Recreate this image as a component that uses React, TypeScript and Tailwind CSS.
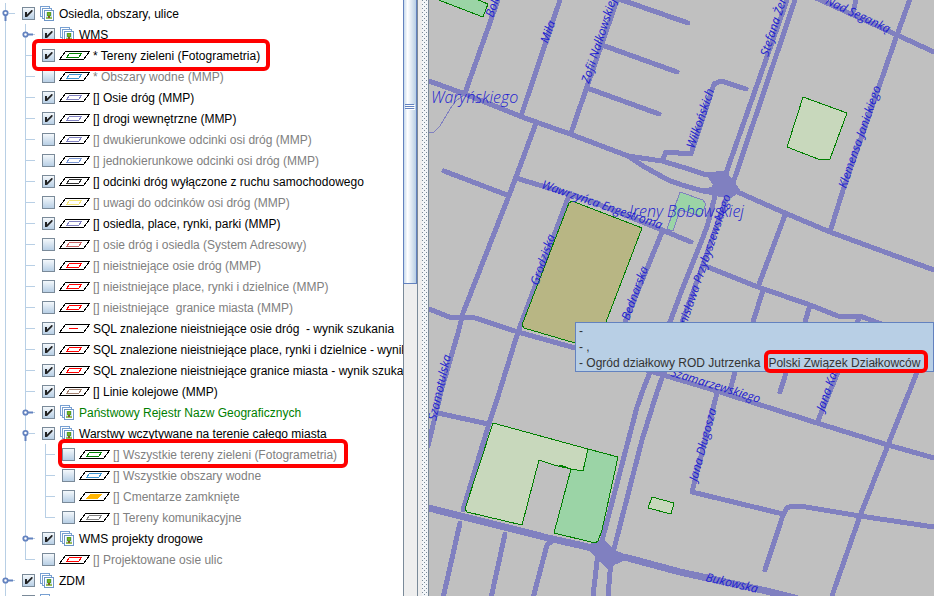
import { useState } from "react";

type Kind = "folder" | "area" | "line" | "fill";

type Layer = {
  name: string;
  depth: number;
  on?: boolean;
  kind: Kind;
  color?: string;
  tone?: string;
  // one entry per guide column
  guides: Guide[];
  mark?: string;
};

type Guide = "open" | "closed" | "tee" | "end" | "bar";

const GRAY = "text-[#808080]";
const BLACK = "text-black";
const VIOLET = "#8080c0";

const item = (name: string, on: boolean, color: string, kind: Kind = "area"): Layer => ({
  name,
  depth: 1,
  on,
  kind,
  color,
  tone: on ? BLACK : GRAY,
  guides: ["bar", "tee"],
});

const sub = (name: string, color: string, kind: Kind = "area"): Layer => ({
  name,
  depth: 2,
  kind,
  color,
  tone: GRAY,
  guides: ["bar", "bar", "tee"],
});

const layers: Layer[] = [
  { name: "Osiedla, obszary, ulice", depth: 0, on: true, kind: "folder", guides: ["open"] },
  { name: "WMS", depth: 1, on: true, kind: "folder", guides: ["bar", "closed"] },
  { ...item("* Tereny zieleni (Fotogrametria)", true, "#008000"), mark: "left-8 -top-[6px] h-8 w-[238px]" },
  item("* Obszary wodne (MMP)", false, "#3c96d2"),
  item("[] Osie dróg (MMP)", true, VIOLET),
  item("[] drogi wewnętrzne (MMP)", true, VIOLET),
  item("[] dwukierunkowe odcinki osi dróg (MMP)", false, VIOLET),
  item("[] jednokierunkowe odcinki osi dróg (MMP)", false, "#7a96d2"),
  item("[] odcinki dróg wyłączone z ruchu samochodowego", true, "#303030"),
  item("[] uwagi do odcinków osi dróg (MMP)", false, "#f5e678"),
  item("[] osiedla, place, rynki, parki (MMP)", true, VIOLET),
  item("[] osie dróg i osiedla (System Adresowy)", false, "#c86464"),
  item("[] nieistniejące osie dróg (MMP)", false, "#ff0000"),
  item("[] nieistniejące place, rynki i dzielnice (MMP)", false, "#ff0000"),
  item("[] nieistniejące  granice miasta (MMP)", false, "#ff0000"),
  item("SQL znalezione nieistniejące osie dróg  - wynik szukania", true, "#ff0000", "line"),
  item("SQL znalezione nieistniejące place, rynki i dzielnice - wynik szukania", true, "#ff0000"),
  item("SQL znalezione nieistniejące granice miasta - wynik szukania", true, "#ff0000"),
  item("[] Linie kolejowe (MMP)", true, "#a08070"),
  { name: "Państwowy Rejestr Nazw Geograficznych", depth: 1, on: true, kind: "folder", tone: "text-[#008000]", guides: ["bar", "closed"] },
  { name: "Warstwy wczytywane na terenie całego miasta", depth: 1, on: true, kind: "folder", guides: ["bar", "open"] },
  { ...sub("[] Wszystkie tereny zieleni (Fotogrametria)", "#008000"), mark: "left-[58px] -top-[5px] h-[29px] w-[290px]" },
  sub("[] Wszystkie obszary wodne", "#3c96d2"),
  sub("[] Cmentarze zamknięte", "#ffb400", "fill"),
  { ...sub("[] Tereny komunikacyjne", "#808080"), guides: ["bar", "bar", "end"] },
  { name: "WMS projekty drogowe", depth: 1, on: true, kind: "folder", guides: ["bar", "closed"] },
  { ...item("[] Projektowane osie ulic", false, "#ff0000"), guides: ["bar", "end"] },
  { name: "ZDM", depth: 0, on: true, kind: "folder", guides: ["closed"] },
  { name: "", depth: 0, on: true, kind: "folder", guides: ["closed"] },
];

function GuideCell({ type }: { type: Guide }) {
  const line = "#b8cfe5";
  return (
    <svg width="20" height="21" viewBox="0 0 20 21" className="block shrink-0" shapeRendering="crispEdges">
      {type !== "end" && <path d="M5.5 0V21" stroke={line} />}
      {type === "end" && <path d="M5.5 0V10.5H15" stroke={line} fill="none" />}
      {type === "tee" && <path d="M5 10.5H15" stroke={line} />}
      {type === "open" && (
        <g shapeRendering="auto">
          <path d="M9 10.5H15" stroke={line} />
          <path d="M5.5 12V18" stroke="#6382bf" strokeWidth="2" />
          <circle cx="5.5" cy="10" r="2.2" fill="#fff" stroke="#6382bf" strokeWidth="1.8" />
        </g>
      )}
      {type === "closed" && (
        <g shapeRendering="auto">
          <path d="M8 10.5H13" stroke="#6382bf" strokeWidth="2" />
          <path d="M13 10.5H15" stroke={line} />
          <circle cx="5.5" cy="10.5" r="2.2" fill="#fff" stroke="#6382bf" strokeWidth="1.8" />
        </g>
      )}
    </svg>
  );
}

function FolderIcon() {
  return (
    <svg width="14" height="15" viewBox="0 0 14 15" className="block shrink-0" shapeRendering="crispEdges">
      <rect x="0.5" y="0.5" width="9" height="10" fill="#fff" stroke="#78a0d2" />
      <rect x="2.5" y="2.5" width="9" height="10" fill="#fff" stroke="#78a0d2" />
      <rect x="4.5" y="4.5" width="9" height="10" fill="#fff" stroke="#6e96c8" />
      <rect x="6" y="6" width="6" height="7" fill="#c8dcf0" />
      <rect x="7" y="6" width="4" height="4" fill="#5aa01e" />
      <rect x="8" y="7" width="2" height="2" fill="#78b428" />
      <rect x="6" y="11" width="6" height="2" fill="#96be5a" />
      <rect x="8" y="10" width="2" height="2" fill="#825a28" />
    </svg>
  );
}

function LayerIcon({ kind, color }: { kind: Kind; color?: string }) {
  return (
    <svg width="31" height="9" viewBox="0 0 31 9" className="block shrink-0" shapeRendering="crispEdges">
      <path d="M0.5 8.5L6.5 0.5H30.5L24.5 8.5Z" fill="#fff" stroke="#000" />
      {kind === "line" && <path d="M10 4.5H19" stroke={color} />}
      {kind === "area" && <path d="M7.5 6.5L10.5 2.5H22.5L19.5 6.5Z" fill="none" stroke={color} />}
      {kind === "fill" && <path d="M7 7L11 2H23L19 7Z" fill={color} />}
    </svg>
  );
}

function Row({ layer, id }: { layer: Layer; id: string }) {
  const [on, setOn] = useState(!!layer.on);
  const last = layer.guides.length - 1;
  return (
    <li className="relative flex h-[21px] items-center">
      {layer.guides.map((g, i) =>
        i === last && (g === "open" || g === "closed") ? (
          <button key={i} type="button" aria-expanded={g === "open"} className="block shrink-0">
            <GuideCell type={g} />
          </button>
        ) : (
          <GuideCell key={i} type={g} />
        )
      )}
      <span className="relative ml-[2px] block h-[13px] w-[13px] shrink-0">
        <input
          id={id}
          type="checkbox"
          checked={on}
          onChange={(e) => setOn(e.target.checked)}
          className="block h-[13px] w-[13px] appearance-none border border-[#7a8a99] bg-linear-to-b from-[#f4f8fb] to-[#b8cfe5]"
        />
        {on && (
          <svg width="13" height="13" viewBox="0 0 13 13" className="pointer-events-none absolute inset-0">
            <path d="M3 5H5V7.5L9.5 3H10.5V4.5L5 10H3Z" fill="#222" />
          </svg>
        )}
      </span>
      <label htmlFor={id} className={`flex items-center whitespace-pre ${layer.tone ?? BLACK}`}>
        {layer.kind === "folder" ? (
          <span className="ml-[5px] mr-[5px]">
            <FolderIcon />
          </span>
        ) : (
          <span className="ml-1 mr-[3px]">
            <LayerIcon kind={layer.kind} color={layer.color} />
          </span>
        )}
        {layer.name}
      </label>
      {layer.mark && (
        <span className={`pointer-events-none absolute z-10 rounded-md border-4 border-[#ff0000] ${layer.mark}`} />
      )}
    </li>
  );
}

function ScrollBar() {
  return (
    <div className="w-[15px] shrink-0 border-r border-[#7a8a99] bg-[#eeeeee]">
      <div className="flex h-full flex-col border-l border-[#7a8a99]">
        <div className="-ml-px h-[284px] border-x border-b border-[#6382bf] bg-linear-to-r from-[#c8daec] via-white via-30% to-[#b8cfe5] pt-[104px]">
          <svg width="10" height="6" viewBox="0 0 10 6" className="mx-auto block" shapeRendering="crispEdges">
            <path d="M0 0.5H9M0 2.5H9M0 4.5H9" stroke="#6382bf" />
            <path d="M1 1.5H10M1 3.5H10M1 5.5H10" stroke="#fff" />
          </svg>
        </div>
      </div>
    </div>
  );
}

function Divider() {
  return (
    <div className="flex w-[11px] shrink-0 justify-end border-r border-[#7a8a99] bg-[#eeeeee]">
      <svg width="6" height="100%" className="block" shapeRendering="crispEdges">
        <defs>
          <pattern id="bumps" width="6" height="4" patternUnits="userSpaceOnUse">
            <rect width="6" height="4" fill="#f2f5f8" />
            <rect x="0" y="0" width="1" height="1" fill="#7a8a99" />
            <rect x="2" y="2" width="1" height="1" fill="#7a8a99" />
            <rect x="4" y="0" width="1" height="1" fill="#7a8a99" />
          </pattern>
        </defs>
        <rect width="6" height="100%" fill="url(#bumps)" />
      </svg>
    </div>
  );
}

const roads = [
  "M498 0L465 93",
  "M560 0L521 116",
  "M617 0L571 133",
  "M619 -1L688 23",
  "M602 45L677 72",
  "M587 88L659 114",
  "M429 81L465 94L522 117L570 134L628 156L662 161L682 167L707 175L726 173",
  "M628 156L643 166L668 180L682 185L703 191L727 192",
  "M662 161L666 152L691 154L714 84L721 81L746 89",
  "M536 123L516 177L508 198L463 313L458 333L442 388L428 446",
  "M444 171L507 195",
  "M516 178L588 200L662 230L691 242",
  "M568 198L518 332L500 390L488 427L463 510",
  "M429 309L452 318L472 317L518 332L575 348L640 368L717 391L817 423L888 445L934 458",
  "M662 232L625 322L615 357",
  "M787 0L726 173L727 190",
  "M795 0L733 183L727 190",
  "M715 185L714 200L707 227L680 295L670 322L643 390L637 407L603 537L598 553L593 596",
  "M732 187L727 197L700 273L682 322L657 392L642 440L615 545L611 560L608 596",
  "M733 190L785 213L830 232L934 270",
  "M910 -1L897 35L843 190L830 232",
  "M816 -2L897 35L934 52",
  "M856 0L853 12",
  "M785 215L758 287",
  "M763 290L753 322L735 372L729 394",
  "M717 393L692 492L783 514",
  "M765 570L783 515L787 508L792 506L800 506L860 516L934 527",
  "M705 266L758 287L810 305L838 316L860 316L884 325",
  "M810 305L805 322L786 373L780 392",
  "M859 318L838 372L817 423",
  "M925 352L910 390L888 445L860 516L834 590L832 596",
  "M438 413L488 424",
  "M460 523L443 598",
  "M505 534L491 598",
  "M552 541L547 545L533 598",
];

const roadText = [
  { t: "Bolesława", x: 493, y: 18, r: -71 },
  { t: "Miła", x: 548, y: 44, r: -71 },
  { t: "Zofii Nałkowskiej", x: 589, y: 84, r: -72 },
  { t: "Stefana Żeromskiego", x: 768, y: 57, r: -72 },
  { t: "Wilkońskich", x: 694, y: 149, r: -71 },
  { t: "Klemensa Janickiego", x: 846, y: 189, r: -71 },
  { t: "Nad Seganką", x: 888, y: 33, r: 25, end: true },
  { t: "Wawrzyńca Engestroma", x: 541, y: 188, r: 19 },
  { t: "Grodziska", x: 538, y: 286, r: -71 },
  { t: "Bednarska", x: 629, y: 321, r: -70 },
  { t: "Stanisława Przybyszewskiego", x: 731, y: 196, r: -71, end: true },
  { t: "Szamotulska", x: 436, y: 421, r: -77 },
  { t: "Szamarzewskiego", x: 759, y: 403, r: 17, end: true },
  { t: "Jana Długosza", x: 697, y: 482, r: -75 },
  { t: "Jana Kasprowicza", x: 824, y: 412, r: -71 },
  { t: "Bukowska", x: 705, y: 581, r: 13 },
];

function CityMap() {
  return (
    <svg
      viewBox="429 0 505 596"
      preserveAspectRatio="xMinYMin slice"
      className="block h-full w-full"
    >
      <g fill="none" stroke="#8080c0" strokeWidth="5" strokeLinecap="round" strokeLinejoin="round" shapeRendering="crispEdges">
        {roads.map((d) => (
          <path key={d} d={d} />
        ))}
        <path d="M425 507L548 538L588 547L612 556L628 558L680 572L762 590L795 598" strokeWidth="7" />
        <path d="M429 133L434 132L440 126L450 109L456 101L464 95" strokeWidth="1" />
        {/* widened crossings */}
        <path d="M708 175L724 173L733 182L739 191L730 197L712 194L701 190L717 188Z" fill="#8080c0" strokeWidth="3" />
        <path d="M588 546L603 541L613 551L628 557L613 564L609 568L598 558Z" fill="#8080c0" strokeWidth="3" />
      </g>
      <g stroke="#008000" strokeWidth="1" shapeRendering="crispEdges">
        <path d="M436 -1L483 17L488 4L476 -1Z" fill="#9bd4a6" />
        <path d="M803 97L847 113L830 159L818 159L787 147L798 113Z" fill="#c8d8bc" />
        <path d="M569 203L572 201L642 228L626 270L606 322L597 348L575 343L524 328L522 325Z" fill="#b8b684" />
        <path d="M493 423L588 449L583 471L571 469L560 465L554 465L539 460L522 525L467 512L465 509Z" fill="#c8d8bc" />
        <path d="M588 449L618 457L602 530L598 541L595 543L554 533L571 469L583 471Z" fill="#9bd4a6" />
        <path d="M539 460L571 469L554 533L522 525Z" fill="#c0c0c0" stroke="none" />
        <path d="M522 525L539 460L554 465L571 469L554 533" fill="none" />
        <path d="M652 497L674 503L671 514L648 508Z" fill="#c8d8bc" />
        <path d="M680 192L703 200L706 204L701 216L680 210L673 231L667 229Z" fill="#9bd4a6" stroke="#8080c0" />
      </g>
      <g fill="#2020d0" className="font-['Open_Sans',sans-serif] text-[12px] italic">
        {roadText.map((l) => (
          <text key={l.t} transform={`translate(${l.x} ${l.y}) rotate(${l.r})`} textAnchor={l.end ? "end" : "start"}>
            {l.t}
          </text>
        ))}
      </g>
      <g fill="#2020d0" className="font-['Open_Sans',sans-serif] text-[16px] font-light italic">
        <text x="431" y="103">Waryńskiego</text>
        <text x="629" y="217">Ireny Bobowskiej</text>
      </g>
    </svg>
  );
}

export default function App() {
  return (
    <div className="flex h-screen overflow-hidden bg-white font-['Liberation_Sans',Arial,sans-serif] text-[12px] leading-4">
      <aside className="w-[403px] shrink-0 overflow-hidden pt-[3px]">
        <ul>
          {layers.map((l, i) => (
            <Row key={i} layer={l} id={`layer-${i}`} />
          ))}
        </ul>
      </aside>
      <ScrollBar />
      <Divider />
      <main className="relative min-w-0 flex-1 bg-[#c0c0c0]">
        <CityMap />
        <div className="absolute left-[146px] right-0 top-[322px] whitespace-pre border border-[#6382bf] bg-[#b8cfe5] px-[3px] text-[#333333]">
          <p>-</p>
          <p>- ,</p>
          <p className="flex gap-2">
            <span>- Ogród działkowy ROD Jutrzenka</span>
            <span className="relative">
              Polski Związek Działkowców
              <span className="absolute -left-1 -right-2 -top-[5px] h-[23px] rounded-md border-4 border-[#ff0000]" />
            </span>
          </p>
        </div>
      </main>
    </div>
  );
}
